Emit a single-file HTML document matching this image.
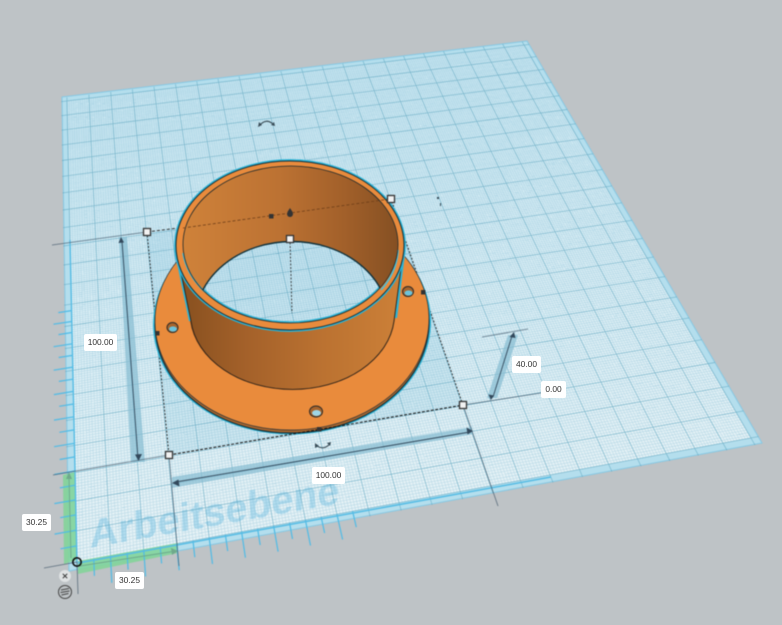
<!DOCTYPE html>
<html><head><meta charset="utf-8">
<style>
html,body{margin:0;padding:0;width:782px;height:625px;overflow:hidden;background:#bec3c6}
svg{position:absolute;left:0;top:0;filter:blur(.4px)}
.l{position:absolute;background:#fff;color:#333;font:8.4px/17px "Liberation Sans",sans-serif;text-align:center;height:17px;border-radius:2px}
</style></head><body>
<svg id="s" width="782" height="625" viewBox="0 0 782 625" xmlns="http://www.w3.org/2000/svg">
<defs>
<linearGradient id="base" gradientUnits="userSpaceOnUse" x1="300" y1="50" x2="350" y2="520">
<stop offset="0" stop-color="#cfeaf4"/><stop offset="1" stop-color="#e6f2f6"/></linearGradient>
<linearGradient id="wallOut" gradientUnits="userSpaceOnUse" x1="180" x2="400" y1="0" y2="0">
<stop offset="0" stop-color="#87501f"/><stop offset=".3" stop-color="#a4612a"/><stop offset=".65" stop-color="#bb7231"/><stop offset="1" stop-color="#cc8038"/></linearGradient>
<linearGradient id="wallIn" gradientUnits="userSpaceOnUse" x1="183" x2="398" y1="0" y2="0">
<stop offset="0" stop-color="#cf823a"/><stop offset=".45" stop-color="#bc7233"/><stop offset=".75" stop-color="#a2602a"/><stop offset="1" stop-color="#855023"/></linearGradient>
<clipPath id="innerC"><ellipse cx="290.5" cy="244.5" rx="107.5" ry="78.5"/></clipPath>
<clipPath id="holeC" ><ellipse cx="292" cy="321.5" rx="97" ry="80" clip-path="url(#innerC)"/></clipPath>
</defs>
<g id="plate">
<polygon points="62,97 527,41 762,443 69,571" fill="#b4deed" stroke="#86c8e3" stroke-width="1"/>
<polygon id="inner" points="77,562 751,438 524,45 67,101" fill="url(#base)"/>
<text transform="matrix(.985 -.176 .03 1 90 548)" font-family="Liberation Sans,sans-serif" font-weight="700" font-size="40" fill="#b2dcee">Arbeitsebene</text>
<polygon points="169,455 463,405 390,198 147,232" fill="#84c3dd" fill-opacity=".2"/>
<g id="grid"></g>
</g>
<!-- green rulers -->
<polygon points="63,475 75,472 77,560 64,564" fill="#80d596" fill-opacity=".85"/>
<polygon points="78,561 178,543 178,553 78,574" fill="#80d596" fill-opacity=".85"/>
<g id="ticks"></g>
<path d="M78 563L551 477" stroke="#56bce4" stroke-width="1.5" fill="none"/>
<path d="M77 562L70 240" stroke="#56bce4" stroke-width="1.4" fill="none"/>
<path d="M69 476L71 558" stroke="#6fa98c" stroke-width="1" fill="none"/>
<path d="M69 472l-3 7h6z" fill="#6fa98c"/>
<path d="M80 566L176 551" stroke="#6fa98c" stroke-width="1" fill="none"/>
<path d="M178 551l-7-3 1 7z" fill="#6fa98c"/>
<!-- dim bars -->
<g fill="#86bcd2" fill-opacity=".7">
<polygon points="119,237 127,237 145,462 131,462"/>
<polygon points="172,477 472,427 473,434 172,488"/>
<polygon points="508,335 518,335 497,398 487,398"/>
</g>
<g stroke="#42586a" stroke-width=".8" fill="none" opacity=".8">
<path d="M52 245L147 232"/>
<path d="M53 475L169 455"/>
<path d="M169 455L179 566"/>
<path d="M463 405L498 506"/>
<path d="M482 337L528 329"/>
<path d="M463 405L541 393"/>
<path d="M44 568L77 562"/>
<path d="M77 562L78 594"/>
</g>
<g stroke="#33495c" stroke-width=".9" fill="none">
<path d="M122 241L138 458"/>
<path d="M176 482L470 432"/>
<path d="M512 336L493 397"/>
</g>
<g fill="#33495c">
<path d="M138.5 461l-3.5-6.5 7-.5z"/><path d="M121 237l-2.5 6 5.5-.5z"/>
<path d="M172 483l6.5-3.5 1 7z"/><path d="M473 431l-6.5-3.5 1 7z"/>
<path d="M514 332l-4.5 5 6 1z"/><path d="M491 400l-2.5-5.5 5.5 1z"/>
</g>
<!-- object -->
<path d="M147 232L178 228" stroke="#222" stroke-width=".9" stroke-dasharray="3 2" fill="none"/>
<path d="M147 232L169 455M463 405L391 199" stroke="#222" stroke-width=".9" stroke-dasharray="2 1.5" fill="none"/>
<g transform="rotate(-1.5 292 321)">
<ellipse cx="292" cy="323" rx="137.5" ry="110" fill="#a8642c" stroke="#2cb4d6" stroke-width="3"/>
<ellipse cx="292" cy="323" rx="137" ry="110" fill="#a8642c" stroke="#14343f" stroke-width="1.2"/>
<ellipse cx="292" cy="320" rx="137" ry="110" fill="#e98b3c" stroke="#26343a" stroke-width=".7"/>
</g>
<!-- holes -->
<g stroke="#2b2a28" stroke-width="1">
<ellipse cx="172.5" cy="327.5" rx="5.5" ry="5" fill="#a8642c"/>
<ellipse cx="408" cy="291.5" rx="5.5" ry="5" fill="#a8642c"/>
<ellipse cx="316" cy="411.5" rx="6.5" ry="5.5" fill="#a8642c"/>
</g>
<ellipse cx="173" cy="329" rx="4" ry="2.6" fill="#6cc3da"/>
<ellipse cx="408.5" cy="293" rx="4" ry="2.6" fill="#6cc3da"/>
<ellipse cx="316.5" cy="413" rx="4.5" ry="3" fill="#9fd6e6"/>
<!-- outer wall -->
<path d="M176 246L190 321A103 76 0 0 0 395 321L404 246Z" fill="url(#wallOut)"/>
<path d="M176 253L190 321M404 253L396 318" stroke="#2cb4d6" stroke-width="2.2" fill="none"/>
<path d="M177 253L191 321A102 76 0 0 0 394 321L403 253" stroke="#2a2018" stroke-width=".9" fill="none"/>
<!-- ring -->
<ellipse cx="290" cy="245.5" rx="115" ry="85.5" fill="none" stroke="#2cb4d6" stroke-width="1.7"/>
<ellipse cx="290" cy="245.5" rx="114" ry="84.5" fill="#e98b3c" stroke="#14303a" stroke-width="1"/>
<ellipse cx="290.5" cy="244.5" rx="107.5" ry="78.5" fill="url(#wallIn)"/>
<use href="#plate" clip-path="url(#holeC)"/>
<ellipse cx="290.5" cy="244.5" rx="106.5" ry="77.5" fill="none" stroke="#2cb4d6" stroke-width="1.6" clip-path="url(#holeC)"/>
<path d="M183 253A107 78 0 0 0 205 292M398 250A107 78 0 0 1 381 290" stroke="#47bfdc" stroke-width="1.6" fill="none"/>
<ellipse cx="292" cy="321.5" rx="97" ry="80" fill="none" stroke="#10323c" stroke-width="1.4" clip-path="url(#innerC)"/>
<ellipse cx="290.5" cy="244.5" rx="107.5" ry="78.5" fill="none" stroke="#1e2a2c" stroke-width=".8"/>
<!-- dashes over object -->
<path d="M183 228L390 199" stroke="#6e3e18" stroke-width=".8" stroke-dasharray="3 2" fill="none"/>
<path d="M290 239L292 313" stroke="#222" stroke-width=".8" stroke-dasharray="2 1.5" fill="none"/>
<path d="M169 455L463 405" stroke="#111" stroke-width="1" stroke-dasharray="3 1.5" fill="none"/>
<!-- small markers -->
<g fill="#333">
<rect x="269" y="214" width="4.5" height="4.5"/>
<rect x="155" y="331" width="4.5" height="4.5"/>
<rect x="421" y="290" width="4.5" height="4.5"/>
<rect x="317" y="427" width="4.5" height="4.5"/>
<circle cx="290" cy="214" r="3"/><path d="M290 208l-2.6 4h5.2z"/>
</g>
<g fill="#f2f2f2" stroke="#333" stroke-width="1.3">
<rect x="143.5" y="228.5" width="7" height="7"/>
<rect x="387.5" y="195.5" width="7" height="7"/>
<rect x="165.5" y="451.5" width="7" height="7"/>
<rect x="459.5" y="401.5" width="7" height="7"/>
<rect x="286.5" y="235.5" width="7" height="7"/>
</g>
<!-- rotate arrows -->
<g stroke="#3a4d58" stroke-width="1.1" fill="none">
<path d="M260 125Q266 118 273 124"/>
<path d="M316 445Q323 451 330 444"/>
</g>
<g fill="#3a4d58">
<path d="M258 127l1-5 3 3z"/><path d="M275 126l-4-1 3-3z"/>
<path d="M315 443l0 5 4-2z"/><path d="M331 442l-4 1 3 3z"/>
<rect x="437" y="197" width="2" height="2"/><rect x="440" y="203" width="1" height="3"/>
</g>
<!-- origin controls -->
<circle cx="77" cy="562" r="4.2" fill="none" stroke="#111" stroke-width="1.6"/>
<circle cx="65" cy="576" r="6" fill="#dfe2e3"/>
<path d="M62.8 573.8L67.2 578.2M67.2 573.8L62.8 578.2" stroke="#333" stroke-width="1"/>
<circle cx="65" cy="592" r="6.5" fill="#bec3c6" stroke="#444" stroke-width="1"/>
<path d="M61 590L69 588.5M60.5 592.5L69.5 591M61.5 595L68.5 593.5" stroke="#444" stroke-width="1" fill="none"/>
</svg>
<div class="l" style="left:84px;top:334px;width:33px">100.00</div>
<div class="l" style="left:312px;top:467px;width:33px">100.00</div>
<div class="l" style="left:512px;top:356px;width:29px">40.00</div>
<div class="l" style="left:541px;top:381px;width:25px">0.00</div>
<div class="l" style="left:22px;top:514px;width:29px">30.25</div>
<div class="l" style="left:115px;top:572px;width:29px">30.25</div>
<script>
(function(){
var p=[[77,562],[751,438],[524,45],[67,101]];
var x0=p[0][0],y0=p[0][1],x1=p[1][0],y1=p[1][1],x2=p[2][0],y2=p[2][1],x3=p[3][0],y3=p[3][1];
var dx1=x1-x2,dx2=x3-x2,sx=x0-x1+x2-x3,dy1=y1-y2,dy2=y3-y2,sy=y0-y1+y2-y3;
var den=dx1*dy2-dx2*dy1,g=(sx*dy2-dx2*sy)/den,h=(dx1*sy-sx*dy1)/den;
var a=x1-x0+g*x1,b=x3-x0+h*x3,d=y1-y0+g*y1,e=y3-y0+h*y3;
function H(u,v){var w=g*u+h*v+1;return ((a*u+b*v+x0)/w).toFixed(1)+" "+((d*u+e*v+y0)/w).toFixed(1);}
var N=220,f="",m="",i,A=-.012,B=1.012;
for(i=0;i<=N;i+=1){var t=i/N;f+="M"+H(t,0)+"L"+H(t,1)+"M"+H(0,t)+"L"+H(1,t);}
for(i=0;i<=N;i+=10){var t2=i/N;m+="M"+H(t2,A)+"L"+H(t2,B)+"M"+H(A,t2)+"L"+H(B,t2);}
document.getElementById("grid").innerHTML=
'<path d="'+f+'" stroke="#4f9fc0" stroke-opacity=".3" stroke-width=".55" fill="none"/>'+
'<path d="'+m+'" stroke="#4a9ab5" stroke-opacity=".6" stroke-width=".65" fill="none"/>';
var q="";
for(i=1;i<=17;i++){var L=(i%2==0)?-.038:-.024;var tx=i*5/N;
q+="M"+H(tx,0)+"L"+H(tx,L);}
for(i=1;i<=34;i++){var L2=(i%2==0)?-.03:-.022;var ty=i*5.1/N;
if(ty>.46)break;
q+="M"+H(0,ty)+"L"+H(L2,ty);}
document.getElementById("ticks").innerHTML='<path d="'+q+'" stroke="#4fbbe6" stroke-width="1.2" fill="none"/>';
})();
</script>
</body></html>
